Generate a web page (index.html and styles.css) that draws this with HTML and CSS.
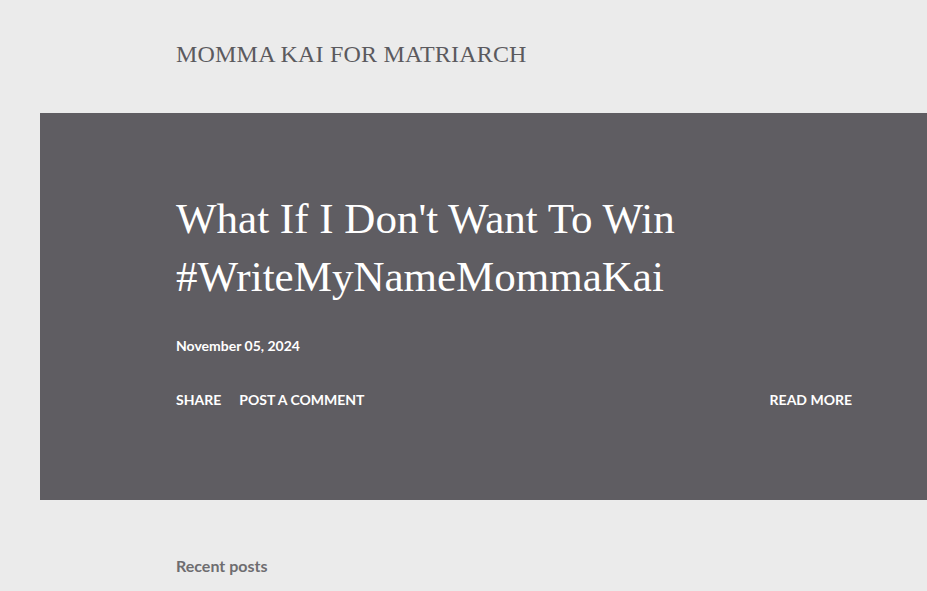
FILE: index.html
```html
<!DOCTYPE html>
<html>
<head>
<meta charset="utf-8">
<link rel="stylesheet" href="styles.css">
</head>
<body>
<header class="site-header">
  <h1 class="blog-title">MOMMA KAI FOR MATRIARCH</h1>
</header>
<section class="hero">
  <div class="hero-inner">
    <h2 class="post-title">What If I Don't Want To Win #WriteMyNameMommaKai</h2>
    <div class="post-date">November 05, 2024</div>
    <div class="post-actions">
      <div class="left-actions">
        <span class="action">SHARE</span>
        <span class="action">POST A COMMENT</span>
      </div>
      <span class="action">READ MORE</span>
    </div>
  </div>
</section>
<section class="recent">
  <h3 class="recent-title">Recent posts</h3>
</section>
</body>
</html>
```
FILE: styles.css
```css
html, body {
  margin: 0;
  padding: 0;
  background: #ebebeb;
  overflow: hidden;
}
body {
  width: 927px;
  height: 591px;
  font-family: Lato, "Liberation Sans", sans-serif;
}
.site-header {
  height: 113px;
  padding-left: 176px;
  box-sizing: border-box;
  display: flex;
  align-items: flex-start;
}
.blog-title {
  margin: 40px 0 0 0;
  font-family: "Liberation Serif", serif;
  font-weight: normal;
  font-size: 24px;
  line-height: 28px;
  color: #5b5a5e;
  letter-spacing: 0.2px;
}
.hero {
  margin-left: 40px;
  height: 387px;
  background: #5f5d62;
  padding: 77px 75px 0 136px;
  box-sizing: border-box;
}
.post-title {
  margin: 0;
  font-family: "Liberation Serif", serif;
  font-weight: normal;
  font-size: 43px;
  line-height: 58px;
  color: #ffffff;
  max-width: 540px;
}
.post-date {
  margin-top: 31px;
  font-weight: bold;
  font-size: 14px;
  line-height: 18px;
  color: #ffffff;
}
.post-actions {
  margin-top: 36px;
  display: flex;
  justify-content: space-between;
  align-items: center;
}
.left-actions {
  display: flex;
  gap: 18px;
}
.action {
  font-weight: bold;
  font-size: 14px;
  line-height: 18px;
  color: #ffffff;
}
.recent {
  padding: 57px 0 0 176px;
}
.recent-title {
  margin: 0;
  font-weight: bold;
  font-size: 16px;
  line-height: 18px;
  color: #6e6d70;
}
```
